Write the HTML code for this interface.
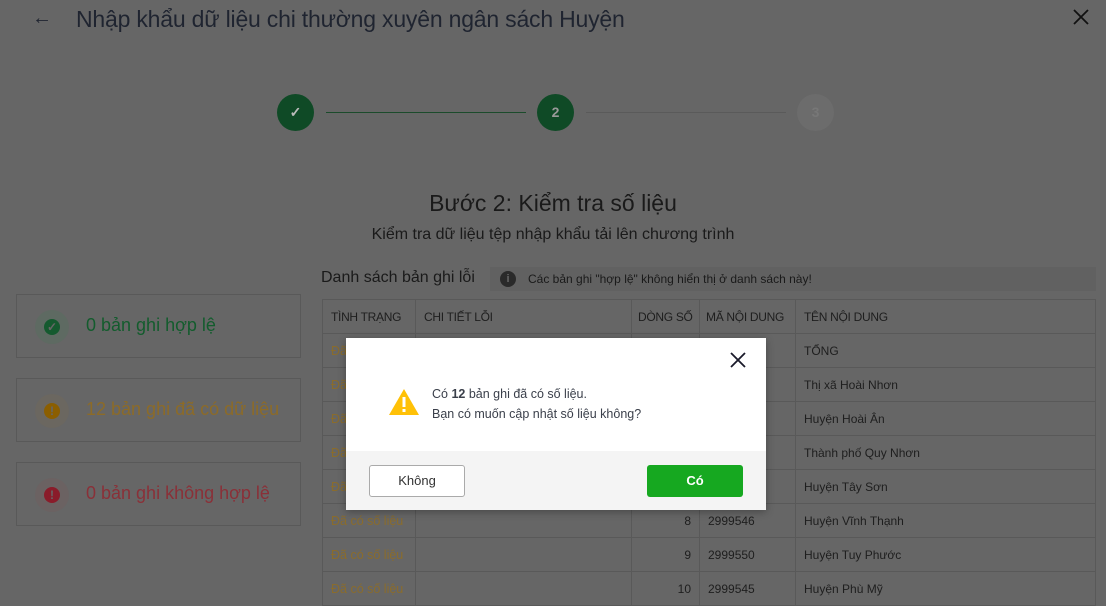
<!DOCTYPE html>
<html><head><meta charset="utf-8"><style>
*{box-sizing:border-box;margin:0;padding:0}
body{width:1106px;height:606px;overflow:hidden;background:#666;font-family:"Liberation Sans",sans-serif;position:relative;color:#222}
.a{position:absolute}
.title{left:76px;top:6px;font-size:23px;color:#1f2430;letter-spacing:-.2px;white-space:nowrap}
.circ{border-radius:50%;width:37px;height:37px;text-align:center;line-height:37px;font-size:14px;font-weight:bold;color:#aaa}
.card{left:16px;width:285px;height:64px;border:1px solid #595959}
.card .ic{position:absolute;left:18px;top:15px;width:34px;height:34px;border-radius:50%}
.card .ic i{position:absolute;left:9px;top:9px;width:16px;height:16px;border-radius:50%;color:#666;font-style:normal;font-size:12px;font-weight:bold;text-align:center;line-height:16px}
.card span{position:absolute;left:69px;top:20px;font-size:18px;white-space:nowrap}
table{position:absolute;left:322px;top:299px;width:774px;border-collapse:collapse;font-size:12px;table-layout:fixed}
td,th{border:1px solid #595959;height:34px;padding:0 8px;text-align:left;font-weight:normal;color:#1e1e1e;white-space:nowrap;overflow:hidden}
th{letter-spacing:-.3px}
td:first-child{color:#8a6c2c;font-size:12.5px}
.num{text-align:right}
</style></head><body>
<div class="a" style="left:32px;top:7px;font-size:20px;color:#1f2430">←</div>
<div class="a title">Nhập khẩu dữ liệu chi thường xuyên ngân sách Huyện</div>
<svg class="a" style="left:1073px;top:9px" width="16" height="16" viewBox="0 0 16 16"><path d="M1 1L15 15M15 1L1 15" stroke="#111" stroke-width="1.8"/></svg>
<div class="a circ" style="left:277px;top:94px;background:#0f4a26;color:#bbb">✓</div>
<div class="a" style="left:326px;top:112px;width:200px;height:1px;background:#1b4b2b"></div>
<div class="a circ" style="left:537px;top:94px;background:#0f4a26;color:#999">2</div>
<div class="a" style="left:586px;top:112px;width:200px;height:1px;background:#5a5a5a"></div>
<div class="a circ" style="left:797px;top:94px;background:#6c6c6c;color:#777">3</div>
<div class="a" style="left:0;width:1106px;top:190px;text-align:center;font-size:23px;color:#1a1a1a">Bước 2: Kiểm tra số liệu</div>
<div class="a" style="left:0;width:1106px;top:226px;text-align:center;font-size:16px;color:#1a1a1a">Kiểm tra dữ liệu tệp nhập khẩu tải lên chương trình</div>
<div class="a" style="left:321px;top:269px;font-size:16px;color:#1a1a1a">Danh sách bản ghi lỗi</div>
<div class="a" style="left:490px;top:267px;width:606px;height:24px;background:#616161"></div>
<div class="a" style="left:500px;top:271px;width:16px;height:16px;border-radius:50%;background:#2a2a2a;color:#666;font-size:11px;font-weight:bold;text-align:center;line-height:16px">i</div>
<div class="a" style="left:528px;top:272px;font-size:12px;color:#1a1a1a">Các bản ghi "hợp lệ" không hiển thị ở danh sách này!</div>
<div class="a card" style="top:294px"><div class="ic" style="background:#5e6a62"><i style="background:#155a2f">✓</i></div><span style="color:#135c2d">0 bản ghi hợp lệ</span></div>
<div class="a card" style="top:378px"><div class="ic" style="background:#6b6760"><i style="background:#8b5e00">!</i></div><span style="color:#8c6b28">12 bản ghi đã có dữ liệu</span></div>
<div class="a card" style="top:462px"><div class="ic" style="background:#6b6262"><i style="background:#8a1c2a">!</i></div><span style="color:#8a3038">0 bản ghi không hợp lệ</span></div>
<table>
<colgroup><col style="width:93px"><col style="width:216px"><col style="width:68px"><col style="width:96px"><col></colgroup>
<tr><th>TÌNH TRẠNG</th><th>CHI TIẾT LỖI</th><th style="padding:0 6px">DÒNG SỐ</th><th style="padding:0 6px">MÃ NỘI DUNG</th><th>TÊN NỘI DUNG</th></tr>
<tr><td>Đã có số liệu</td><td></td><td class="num">3</td><td>2999000</td><td>TỔNG</td></tr>
<tr><td>Đã có số liệu</td><td></td><td class="num">4</td><td>2999541</td><td>Thị xã Hoài Nhơn</td></tr>
<tr><td>Đã có số liệu</td><td></td><td class="num">5</td><td>2999542</td><td>Huyện Hoài Ân</td></tr>
<tr><td>Đã có số liệu</td><td></td><td class="num">6</td><td>2999543</td><td>Thành phố Quy Nhơn</td></tr>
<tr><td>Đã có số liệu</td><td></td><td class="num">7</td><td>2999544</td><td>Huyện Tây Sơn</td></tr>
<tr><td>Đã có số liệu</td><td></td><td class="num">8</td><td>2999546</td><td>Huyện Vĩnh Thạnh</td></tr>
<tr><td>Đã có số liệu</td><td></td><td class="num">9</td><td>2999550</td><td>Huyện Tuy Phước</td></tr>
<tr><td>Đã có số liệu</td><td></td><td class="num">10</td><td>2999545</td><td>Huyện Phù Mỹ</td></tr>
</table>
<div class="a" style="left:346px;top:338px;width:420px;height:172px;background:#fff;box-shadow:0 2px 8px rgba(0,0,0,.3)">
 <div class="a" style="left:0;top:113px;width:420px;height:59px;background:#f4f4f4"></div>
 <svg class="a" style="left:384px;top:14px" width="16" height="16" viewBox="0 0 16 16"><path d="M1 1L15 15M15 1L1 15" stroke="#1a1a2a" stroke-width="1.8"/></svg>
 <svg class="a" style="left:42px;top:50px" width="32" height="28" viewBox="0 0 32 28"><path d="M16 1L31 27H1Z" fill="#ffc107"/><rect x="14.5" y="9" width="3" height="10" fill="#fff"/><rect x="14.5" y="21" width="3" height="3" fill="#fff"/></svg>
 <div class="a" style="left:86px;top:46px;font-size:12.5px;color:#3a3f4a;line-height:20px">Có <b>12</b> bản ghi đã có số liệu.<br>Bạn có muốn cập nhật số liệu không?</div>
 <div class="a" style="left:23px;top:127px;width:96px;height:32px;border:1px solid #aaa;border-radius:3px;background:#fff;text-align:center;line-height:30px;font-size:13px;color:#333">Không</div>
 <div class="a" style="left:301px;top:127px;width:96px;height:32px;border-radius:3px;background:#16a820;text-align:center;line-height:32px;font-size:13px;color:#fff;font-weight:bold">Có</div>
</div>
</body></html>
